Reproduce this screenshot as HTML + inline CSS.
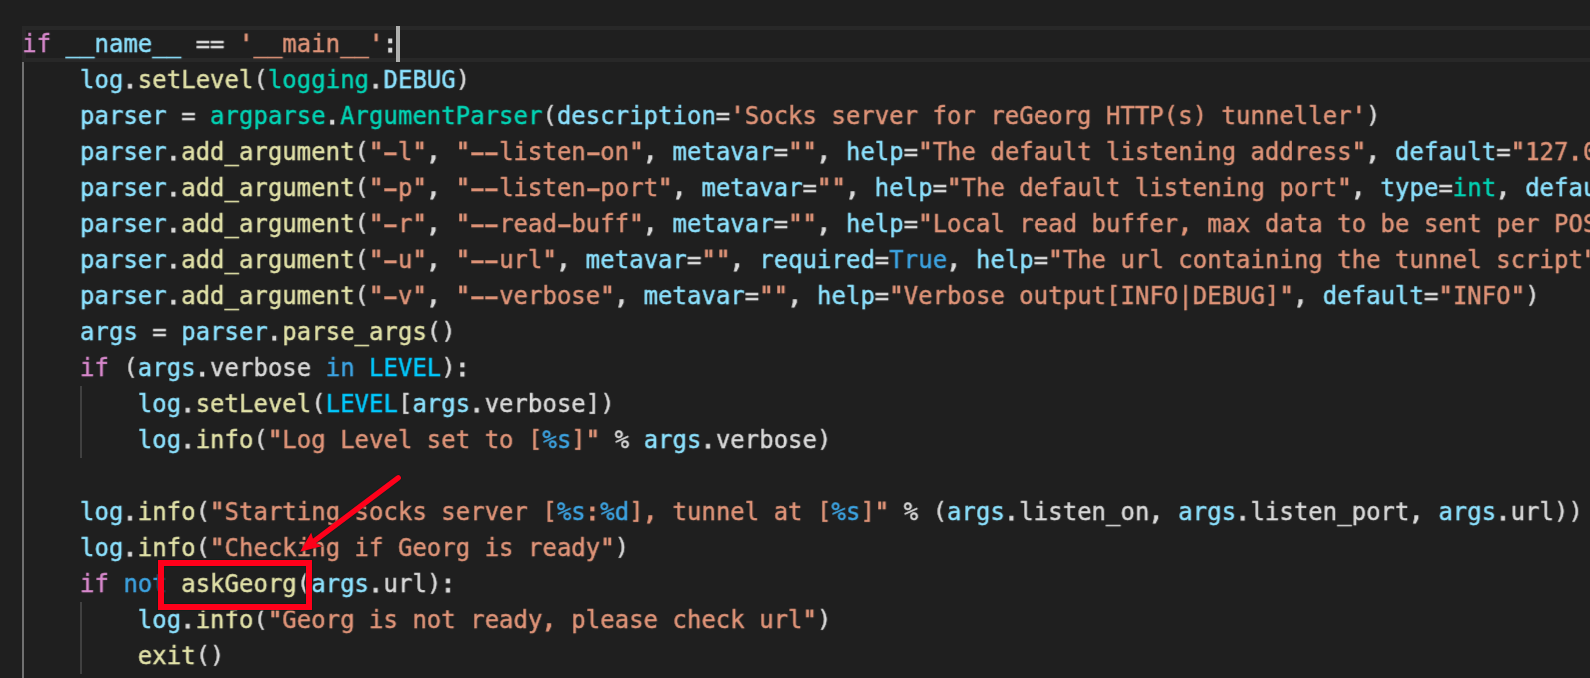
<!DOCTYPE html>
<html lang="en">
<head>
<meta charset="utf-8">
<title>reGeorgSocksProxy.py</title>
<style>
html,body{margin:0;padding:0;background:#1f1f1f;}
body{width:1590px;height:678px;overflow:hidden;position:relative;}
#ed{position:absolute;left:0;top:0;width:1590px;height:678px;overflow:hidden;background:#1f1f1f;}
#cur{position:absolute;left:22px;top:26px;width:1600px;height:36px;box-sizing:border-box;border:4px solid #282828;}
#code{position:absolute;left:22px;top:26px;margin:0;font-family:"DejaVu Sans Mono","Liberation Mono",monospace;font-size:24px;line-height:36px;letter-spacing:0px;color:#dadada;white-space:pre;font-kerning:none;font-variant-ligatures:none;will-change:transform;transform:translate(0.25px,0.1px) rotate(0.001deg);-webkit-font-smoothing:antialiased;-webkit-text-stroke:0.42px currentColor;}
.ln{height:36px;white-space:pre;}
.k{color:#D888CC}.v{color:#8CE2FF}.f{color:#E2E2A8}.s{color:#E09478}.t{color:#00D4B5}.b{color:#3CA4E3}.c{color:#00CAFF}
.h{display:inline-block;transform:translateY(-0.4px) scale(1.9,1.25);}
.o{-webkit-text-stroke:1.1px currentColor;position:relative;left:-0.6px;}
.q{-webkit-text-stroke:0.9px currentColor;}
.p{display:inline-block;transform:translateY(-0.3px) scaleY(0.951);transform-origin:50% 50%;}
.g{position:absolute;width:2px;background:#404040;}
.g.a{background:#707070;}
#caret{position:absolute;left:396px;top:26px;width:4px;height:36px;background:#aeafad;}
#ann{position:absolute;left:0;top:0;}
</style>
</head>
<body>
<div id="ed">
<div id="cur"></div>
<div class="g a" style="left:22px;top:62px;height:616px"></div>
<div class="g" style="left:80px;top:386px;height:72px"></div>
<div class="g" style="left:80px;top:602px;height:72px"></div>
<div id="code"><div class="ln"><span class="k">if</span> <span class="v">__name__</span> == <span class="s"><span class="q">'</span>__main__<span class="q">'</span></span><span class="o">:</span></div><div class="ln">    <span class="v">log</span><span class="o">.</span><span class="f">setLevel</span><span class="p">(</span><span class="t">logging</span><span class="o">.</span><span class="v">DEBUG</span><span class="p">)</span></div><div class="ln">    <span class="v">parser</span> = <span class="t">argparse</span><span class="o">.</span><span class="t">ArgumentParser</span><span class="p">(</span><span class="v">description</span>=<span class="s"><span class="q">'</span>Socks server for reGeorg HTTP<span class="p">(</span>s<span class="p">)</span> tunneller<span class="q">'</span></span><span class="p">)</span></div><div class="ln">    <span class="v">parser</span><span class="o">.</span><span class="f">add_argument</span><span class="p">(</span><span class="s"><span class="q">"</span><span class="h">-</span>l<span class="q">"</span></span><span class="o">,</span> <span class="s"><span class="q">"</span><span class="h">-</span><span class="h">-</span>listen<span class="h">-</span>on<span class="q">"</span></span><span class="o">,</span> <span class="v">metavar</span>=<span class="s"><span class="q">""</span></span><span class="o">,</span> <span class="v">help</span>=<span class="s"><span class="q">"</span>The default listening address<span class="q">"</span></span><span class="o">,</span> <span class="v">default</span>=<span class="s"><span class="q">"</span>127<span class="o">.</span>0</span></div><div class="ln">    <span class="v">parser</span><span class="o">.</span><span class="f">add_argument</span><span class="p">(</span><span class="s"><span class="q">"</span><span class="h">-</span>p<span class="q">"</span></span><span class="o">,</span> <span class="s"><span class="q">"</span><span class="h">-</span><span class="h">-</span>listen<span class="h">-</span>port<span class="q">"</span></span><span class="o">,</span> <span class="v">metavar</span>=<span class="s"><span class="q">""</span></span><span class="o">,</span> <span class="v">help</span>=<span class="s"><span class="q">"</span>The default listening port<span class="q">"</span></span><span class="o">,</span> <span class="v">type</span>=<span class="t">int</span><span class="o">,</span> <span class="v">defau</span></div><div class="ln">    <span class="v">parser</span><span class="o">.</span><span class="f">add_argument</span><span class="p">(</span><span class="s"><span class="q">"</span><span class="h">-</span>r<span class="q">"</span></span><span class="o">,</span> <span class="s"><span class="q">"</span><span class="h">-</span><span class="h">-</span>read<span class="h">-</span>buff<span class="q">"</span></span><span class="o">,</span> <span class="v">metavar</span>=<span class="s"><span class="q">""</span></span><span class="o">,</span> <span class="v">help</span>=<span class="s"><span class="q">"</span>Local read buffer<span class="o">,</span> max data to be sent per POS</span></div><div class="ln">    <span class="v">parser</span><span class="o">.</span><span class="f">add_argument</span><span class="p">(</span><span class="s"><span class="q">"</span><span class="h">-</span>u<span class="q">"</span></span><span class="o">,</span> <span class="s"><span class="q">"</span><span class="h">-</span><span class="h">-</span>url<span class="q">"</span></span><span class="o">,</span> <span class="v">metavar</span>=<span class="s"><span class="q">""</span></span><span class="o">,</span> <span class="v">required</span>=<span class="b">True</span><span class="o">,</span> <span class="v">help</span>=<span class="s"><span class="q">"</span>The url containing the tunnel script<span class="q">"</span></span></div><div class="ln">    <span class="v">parser</span><span class="o">.</span><span class="f">add_argument</span><span class="p">(</span><span class="s"><span class="q">"</span><span class="h">-</span>v<span class="q">"</span></span><span class="o">,</span> <span class="s"><span class="q">"</span><span class="h">-</span><span class="h">-</span>verbose<span class="q">"</span></span><span class="o">,</span> <span class="v">metavar</span>=<span class="s"><span class="q">""</span></span><span class="o">,</span> <span class="v">help</span>=<span class="s"><span class="q">"</span>Verbose output<span class="p">[</span>INFO|DEBUG<span class="p">]</span><span class="q">"</span></span><span class="o">,</span> <span class="v">default</span>=<span class="s"><span class="q">"</span>INFO<span class="q">"</span></span><span class="p">)</span></div><div class="ln">    <span class="v">args</span> = <span class="v">parser</span><span class="o">.</span><span class="f">parse_args</span><span class="p">(</span><span class="p">)</span></div><div class="ln">    <span class="k">if</span> <span class="p">(</span><span class="v">args</span><span class="o">.</span>verbose <span class="b">in</span> <span class="c">LEVEL</span><span class="p">)</span><span class="o">:</span></div><div class="ln">        <span class="v">log</span><span class="o">.</span><span class="f">setLevel</span><span class="p">(</span><span class="c">LEVEL</span><span class="p">[</span><span class="v">args</span><span class="o">.</span>verbose<span class="p">]</span><span class="p">)</span></div><div class="ln">        <span class="v">log</span><span class="o">.</span><span class="f">info</span><span class="p">(</span><span class="s"><span class="q">"</span>Log Level set to <span class="p">[</span></span><span class="b">%s</span><span class="s"><span class="p">]</span><span class="q">"</span></span> % <span class="v">args</span><span class="o">.</span>verbose<span class="p">)</span></div><div class="ln"></div><div class="ln">    <span class="v">log</span><span class="o">.</span><span class="f">info</span><span class="p">(</span><span class="s"><span class="q">"</span>Starting socks server <span class="p">[</span></span><span class="b">%s</span><span class="s"><span class="o">:</span></span><span class="b">%d</span><span class="s"><span class="p">]</span><span class="o">,</span> tunnel at <span class="p">[</span></span><span class="b">%s</span><span class="s"><span class="p">]</span><span class="q">"</span></span> % <span class="p">(</span><span class="v">args</span><span class="o">.</span>listen_on<span class="o">,</span> <span class="v">args</span><span class="o">.</span>listen_port<span class="o">,</span> <span class="v">args</span><span class="o">.</span>url<span class="p">)</span><span class="p">)</span></div><div class="ln">    <span class="v">log</span><span class="o">.</span><span class="f">info</span><span class="p">(</span><span class="s"><span class="q">"</span>Checking if Georg is ready<span class="q">"</span></span><span class="p">)</span></div><div class="ln">    <span class="k">if</span> <span class="b">not</span> <span class="f">askGeorg</span><span class="p">(</span><span class="v">args</span><span class="o">.</span>url<span class="p">)</span><span class="o">:</span></div><div class="ln">        <span class="v">log</span><span class="o">.</span><span class="f">info</span><span class="p">(</span><span class="s"><span class="q">"</span>Georg is not ready<span class="o">,</span> please check url<span class="q">"</span></span><span class="p">)</span></div><div class="ln">        <span class="f">exit</span><span class="p">(</span><span class="p">)</span></div></div>
<div id="caret"></div>
<svg id="ann" width="1590" height="678" viewBox="0 0 1590 678">
<g fill="none" stroke="#0c1f1b" stroke-opacity="0.6">
<rect x="161" y="563" width="148" height="44" stroke-width="8"/>
<line x1="398.2" y1="477.9" x2="314.5" y2="540.9" stroke-width="7" stroke-linecap="round" stroke-opacity="0.4"/>
<polygon points="300,551.8 311.2,532.4 312.9,538.6 316.2,543.2 321.7,546.2" stroke-width="1.6" stroke-opacity="0.4"/>
</g>
<rect x="161" y="563" width="148" height="44" fill="none" stroke="#ff001a" stroke-width="6"/>
<line x1="398.2" y1="477.9" x2="314.5" y2="540.9" stroke="#ff001a" stroke-width="5.5" stroke-linecap="round"/>
<polygon points="300,551.8 311.2,532.4 312.9,538.6 316.2,543.2 321.7,546.2" fill="#ff001a"/>
</svg>
</div>
</body>
</html>
